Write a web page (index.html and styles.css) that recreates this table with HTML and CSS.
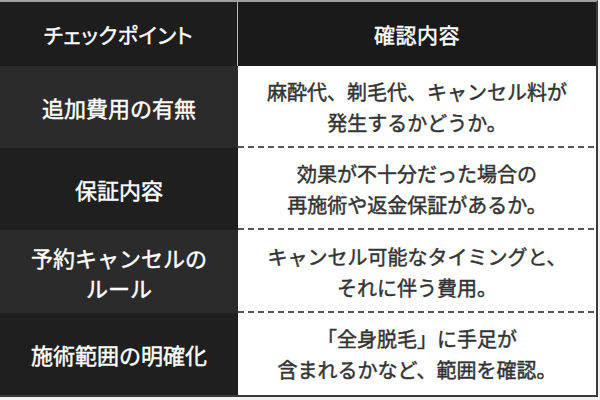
FILE: index.html
```html
<!DOCTYPE html>
<html lang="ja">
<head>
<meta charset="utf-8">
<link rel="stylesheet" href="styles.css">
</head>
<body>
<div class="table">
  <div class="head head-left">チェックポイント</div>
  <div class="head head-right">確認内容</div>

  <div class="key key-light">追加費用の有無</div>
  <div class="val val-dash">麻酔代、剃毛代、キャンセル料が<br>発生するかどうか。</div>

  <div class="key key-dark">保証内容</div>
  <div class="val val-dash">効果が不十分だった場合の<br>再施術や返金保証があるか。</div>

  <div class="key key-light">予約キャンセルの<br>ルール</div>
  <div class="val val-dash">キャンセル可能なタイミングと、<br>それに伴う費用。</div>

  <div class="key key-dark">施術範囲の明確化</div>
  <div class="val">「全身脱毛」に手足が<br>含まれるかなど、範囲を確認。</div>
</div>
</body>
</html>
```

FILE: styles.css
```css
html, body {
  margin: 0;
  padding: 0;
}
body {
  width: 600px;
  height: 400px;
  background: #f2f2f2;
  font-family: "Noto Sans CJK JP", "Noto Sans", sans-serif;
  overflow: hidden;
}
.table {
  width: 596px;
  border-top: 2px solid #a0a0a0;
  border-right: 2px solid #3a3a3a;
  border-bottom: 2px solid #3a3a3a;
  display: grid;
  grid-template-columns: 238px 358px;
  grid-template-rows: 64px 82px 82px 83px 82px;
}
.head {
  display: flex;
  align-items: center;
  justify-content: center;
  color: #ffffff;
  font-size: 21px;
  font-weight: 400;
  font-feature-settings: "palt";
  letter-spacing: 0.5px;
  -webkit-text-stroke: 0.45px #ffffff;
  background: #1d1d1d;
  padding-bottom: 1px;
}
.head-left {
  border-right: 1px solid #b8b8b8;
}
.head-right {
  background: #1a1a1a;
}
.key {
  display: flex;
  align-items: center;
  justify-content: center;
  text-align: center;
  color: #ffffff;
  font-size: 22px;
  font-weight: 400;
  -webkit-text-stroke: 0.45px #ffffff;
  line-height: 30px;
}
.key-light {
  background: #2b2b2b;
}
.key-dark {
  background: #1f1f1f;
}
.val {
  display: flex;
  align-items: center;
  justify-content: center;
  text-align: center;
  background-color: #ffffff;
  color: #333333;
  font-size: 20px;
  font-weight: 400;
  -webkit-text-stroke: 0.45px #333333;
  line-height: 31px;
}
.val-dash {
  background-image: repeating-linear-gradient(to right, #555555 0 6px, transparent 6px 10px);
  background-size: 100% 2px;
  background-position: left bottom;
  background-repeat: no-repeat;
}
```
